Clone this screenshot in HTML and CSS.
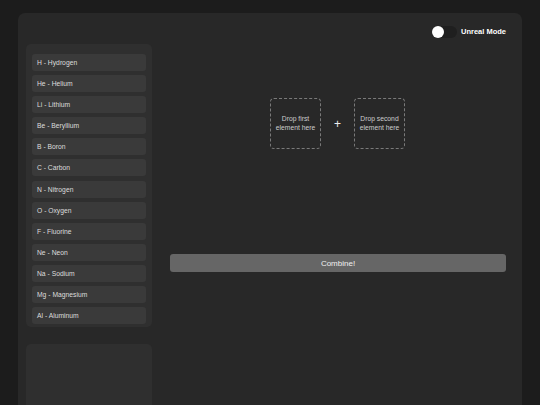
FILE: index.html
```html
<!DOCTYPE html>
<html>
<head>
<meta charset="utf-8">
<link rel="stylesheet" href="styles.css">
</head>
<body>
<div class="app">
  <div class="header">
    <div class="toggle"><span class="knob"></span></div>
    <span class="toggle-label">Unreal Mode</span>
  </div>
  <div class="layout">
    <div class="side">
      <div class="list">
        <div class="item">H - Hydrogen</div>
        <div class="item">He - Helium</div>
        <div class="item">Li - Lithium</div>
        <div class="item">Be - Beryllium</div>
        <div class="item">B - Boron</div>
        <div class="item">C - Carbon</div>
        <div class="item">N - Nitrogen</div>
        <div class="item">O - Oxygen</div>
        <div class="item">F - Fluorine</div>
        <div class="item">Ne - Neon</div>
        <div class="item">Na - Sodium</div>
        <div class="item">Mg - Magnesium</div>
        <div class="item">Al - Aluminum</div>
      </div>
      <div class="panel"></div>
    </div>
    <div class="main">
      <div class="drops">
        <div class="drop">Drop first<br>element here</div>
        <span class="plus">+</span>
        <div class="drop">Drop second<br>element here</div>
      </div>
      <button class="combine">Combine!</button>
    </div>
  </div>
</div>
</body>
</html>
```

FILE: styles.css
```css
html, body {
  margin: 0;
  padding: 0;
  background: #1c1c1c;
  height: 100%;
  overflow: hidden;
  font-family: "Liberation Sans", Arial, sans-serif;
}
body {
  display: flex;
  flex-direction: column;
}
.app {
  margin: 13px 0 0 18px;
  width: 504px;
  flex: 1;
  min-height: 0;
  box-sizing: border-box;
  background: #282828;
  border-radius: 7px 7px 0 0;
  padding: 12px 16px 0 8px;
  display: flex;
  flex-direction: column;
}
.header {
  display: flex;
  justify-content: flex-end;
  align-items: center;
  height: 13px;
  gap: 4px;
}
.toggle {
  width: 25px;
  height: 12px;
  border-radius: 6px;
  background: #1f1f1f;
  display: flex;
  align-items: center;
}
.knob {
  width: 12px;
  height: 12px;
  border-radius: 50%;
  background: #ffffff;
}
.toggle-label {
  color: #ffffff;
  font-weight: bold;
  font-size: 7.5px;
}
.layout {
  flex: 1;
  min-height: 0;
  display: flex;
  gap: 18px;
  margin-top: 6px;
}
.side {
  width: 126px;
  display: flex;
  flex-direction: column;
  gap: 17px;
}
.list {
  background: #2f2f2f;
  border-radius: 5px;
  padding: 10px 6px 2.5px;
  display: flex;
  flex-direction: column;
  gap: 4.1px;
}
.item {
  height: 17px;
  background: #3a3a3a;
  border-radius: 3px;
  padding-left: 5px;
  display: flex;
  align-items: center;
  color: #dddddd;
  font-size: 6.75px;
}
.panel {
  flex: 1;
  background: #2f2f2f;
  border-radius: 5px 5px 0 0;
}
.main {
  flex: 1;
  display: flex;
  flex-direction: column;
}
.drops {
  margin-top: 54px;
  display: flex;
  justify-content: center;
  align-items: center;
  gap: 13px;
  padding-right: 1px;
}
.drop {
  width: 51px;
  height: 51px;
  box-sizing: border-box;
  border: 1px dashed #7a7a7a;
  border-radius: 4px;
  display: flex;
  align-items: center;
  justify-content: center;
  text-align: center;
  color: #cccccc;
  font-size: 6.75px;
  line-height: 8.2px;
}
.plus {
  color: #eeeeee;
  font-size: 12px;
  width: 7px;
  text-align: center;
}
.combine {
  margin-top: 105px;
  height: 18px;
  width: 100%;
  border: none;
  border-radius: 3px;
  background: #666666;
  color: #f0f0f0;
  font-family: "Liberation Sans", Arial, sans-serif;
  font-size: 8px;
  padding: 0;
}
```
